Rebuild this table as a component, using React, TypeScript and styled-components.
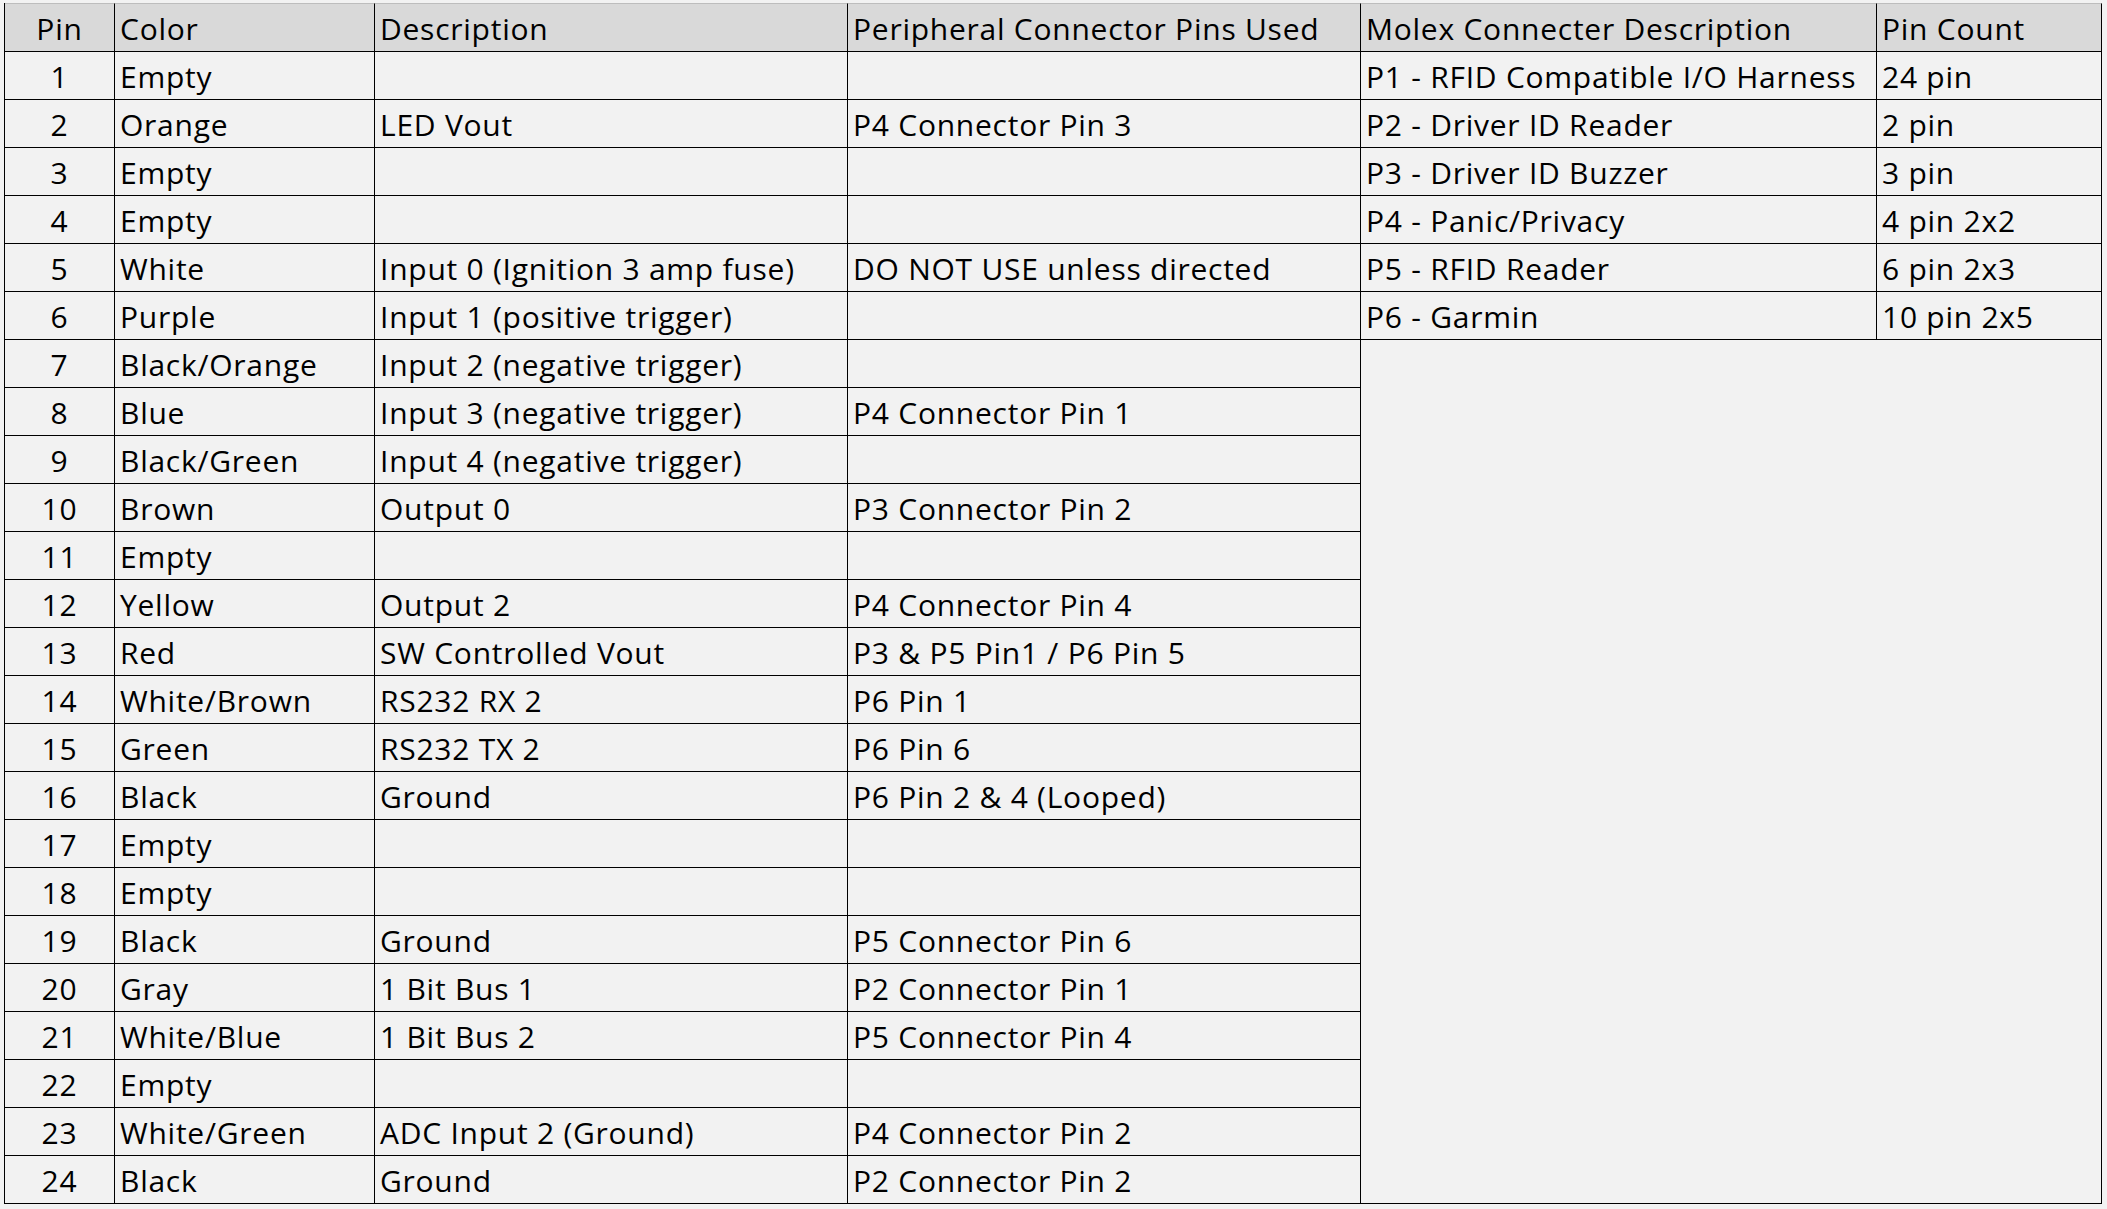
import React from "react";
import styled, { createGlobalStyle } from "styled-components";

const Global = createGlobalStyle`
  html, body {
    margin: 0;
    padding: 0;
    background: #f2f2f2;
  }
  body {
    font-family: "Open Sans", "Liberation Sans", sans-serif;
  }
`;

const Page = styled.div`
  padding: 3px 0 0 4px;
  min-height: 1209px;
  box-sizing: border-box;
`;

const Sheet = styled.div`
  display: grid;
  grid-template-columns: 110px 260px 473px 513px 516px 225px;
  grid-template-rows: 49px;
  grid-auto-rows: 48px;
  width: fit-content;
  border-left: 1px solid #000;
`;

const Cell = styled.div<{ $center?: boolean }>`
  box-sizing: border-box;
  border-right: 1px solid #000;
  border-bottom: 1px solid #000;
  background: #f2f2f2;
  color: #000;
  font-family: "Open Sans", "Liberation Sans", sans-serif;
  font-size: 30px;
  font-weight: 500;
  letter-spacing: 0.75px;
  line-height: 45px;
  padding: 2px 0 0 ${(p) => (p.$center ? "0" : "5px")};
  text-align: ${(p) => (p.$center ? "center" : "left")};
  white-space: nowrap;
  overflow: hidden;
`;

const HeadCell = styled(Cell)`
  background: #d9d9d9;
  border-top: 1px solid #bdbdbd;
`;

const Filler = styled.div`
  grid-column: 5 / 7;
  grid-row: 8 / 26;
  box-sizing: border-box;
  border-right: 1px solid #000;
  border-bottom: 1px solid #000;
  background: #f2f2f2;
`;

type Row = [number, string, string, string];

const rows: Row[] = [
  [1, "Empty", "", ""],
  [2, "Orange", "LED Vout", "P4 Connector Pin 3"],
  [3, "Empty", "", ""],
  [4, "Empty", "", ""],
  [5, "White", "Input 0 (Ignition 3 amp fuse)", "DO NOT USE unless directed"],
  [6, "Purple", "Input 1 (positive trigger)", ""],
  [7, "Black/Orange", "Input 2 (negative trigger)", ""],
  [8, "Blue", "Input 3 (negative trigger)", "P4 Connector Pin 1"],
  [9, "Black/Green", "Input 4 (negative trigger)", ""],
  [10, "Brown", "Output 0", "P3 Connector Pin 2"],
  [11, "Empty", "", ""],
  [12, "Yellow", "Output 2", "P4 Connector Pin 4"],
  [13, "Red", "SW Controlled Vout", "P3 & P5 Pin1 / P6 Pin 5"],
  [14, "White/Brown", "RS232 RX 2", "P6 Pin 1"],
  [15, "Green", "RS232 TX 2", "P6 Pin 6"],
  [16, "Black", "Ground", "P6 Pin 2 & 4 (Looped)"],
  [17, "Empty", "", ""],
  [18, "Empty", "", ""],
  [19, "Black", "Ground", "P5 Connector Pin 6"],
  [20, "Gray", "1 Bit Bus 1", "P2 Connector Pin 1"],
  [21, "White/Blue", "1 Bit Bus 2", "P5 Connector Pin 4"],
  [22, "Empty", "", ""],
  [23, "White/Green", "ADC Input 2 (Ground)", "P4 Connector Pin 2"],
  [24, "Black", "Ground", "P2 Connector Pin 2"],
];

const molex: [string, string][] = [
  ["P1 - RFID Compatible I/O Harness", "24 pin"],
  ["P2 - Driver ID Reader", "2 pin"],
  ["P3 - Driver ID Buzzer", "3 pin"],
  ["P4 - Panic/Privacy", "4 pin 2x2"],
  ["P5 - RFID Reader", "6 pin 2x3"],
  ["P6 - Garmin", "10 pin 2x5"],
];

const headers = [
  "Pin",
  "Color",
  "Description",
  "Peripheral Connector Pins Used",
  "Molex Connecter Description",
  "Pin Count",
];

export default function App() {
  return (
    <>
      <Global />
      <Page>
        <Sheet>
          {headers.map((h, i) => (
            <HeadCell key={h} $center={i === 0}>
              {h}
            </HeadCell>
          ))}
          <Filler />
          {rows.map(([pin, color, desc, periph], idx) => (
            <React.Fragment key={pin}>
              <Cell $center>{pin}</Cell>
              <Cell>{color}</Cell>
              <Cell>{desc}</Cell>
              <Cell>{periph}</Cell>
              {idx < molex.length && (
                <>
                  <Cell>{molex[idx][0]}</Cell>
                  <Cell>{molex[idx][1]}</Cell>
                </>
              )}
            </React.Fragment>
          ))}
        </Sheet>
      </Page>
    </>
  );
}
